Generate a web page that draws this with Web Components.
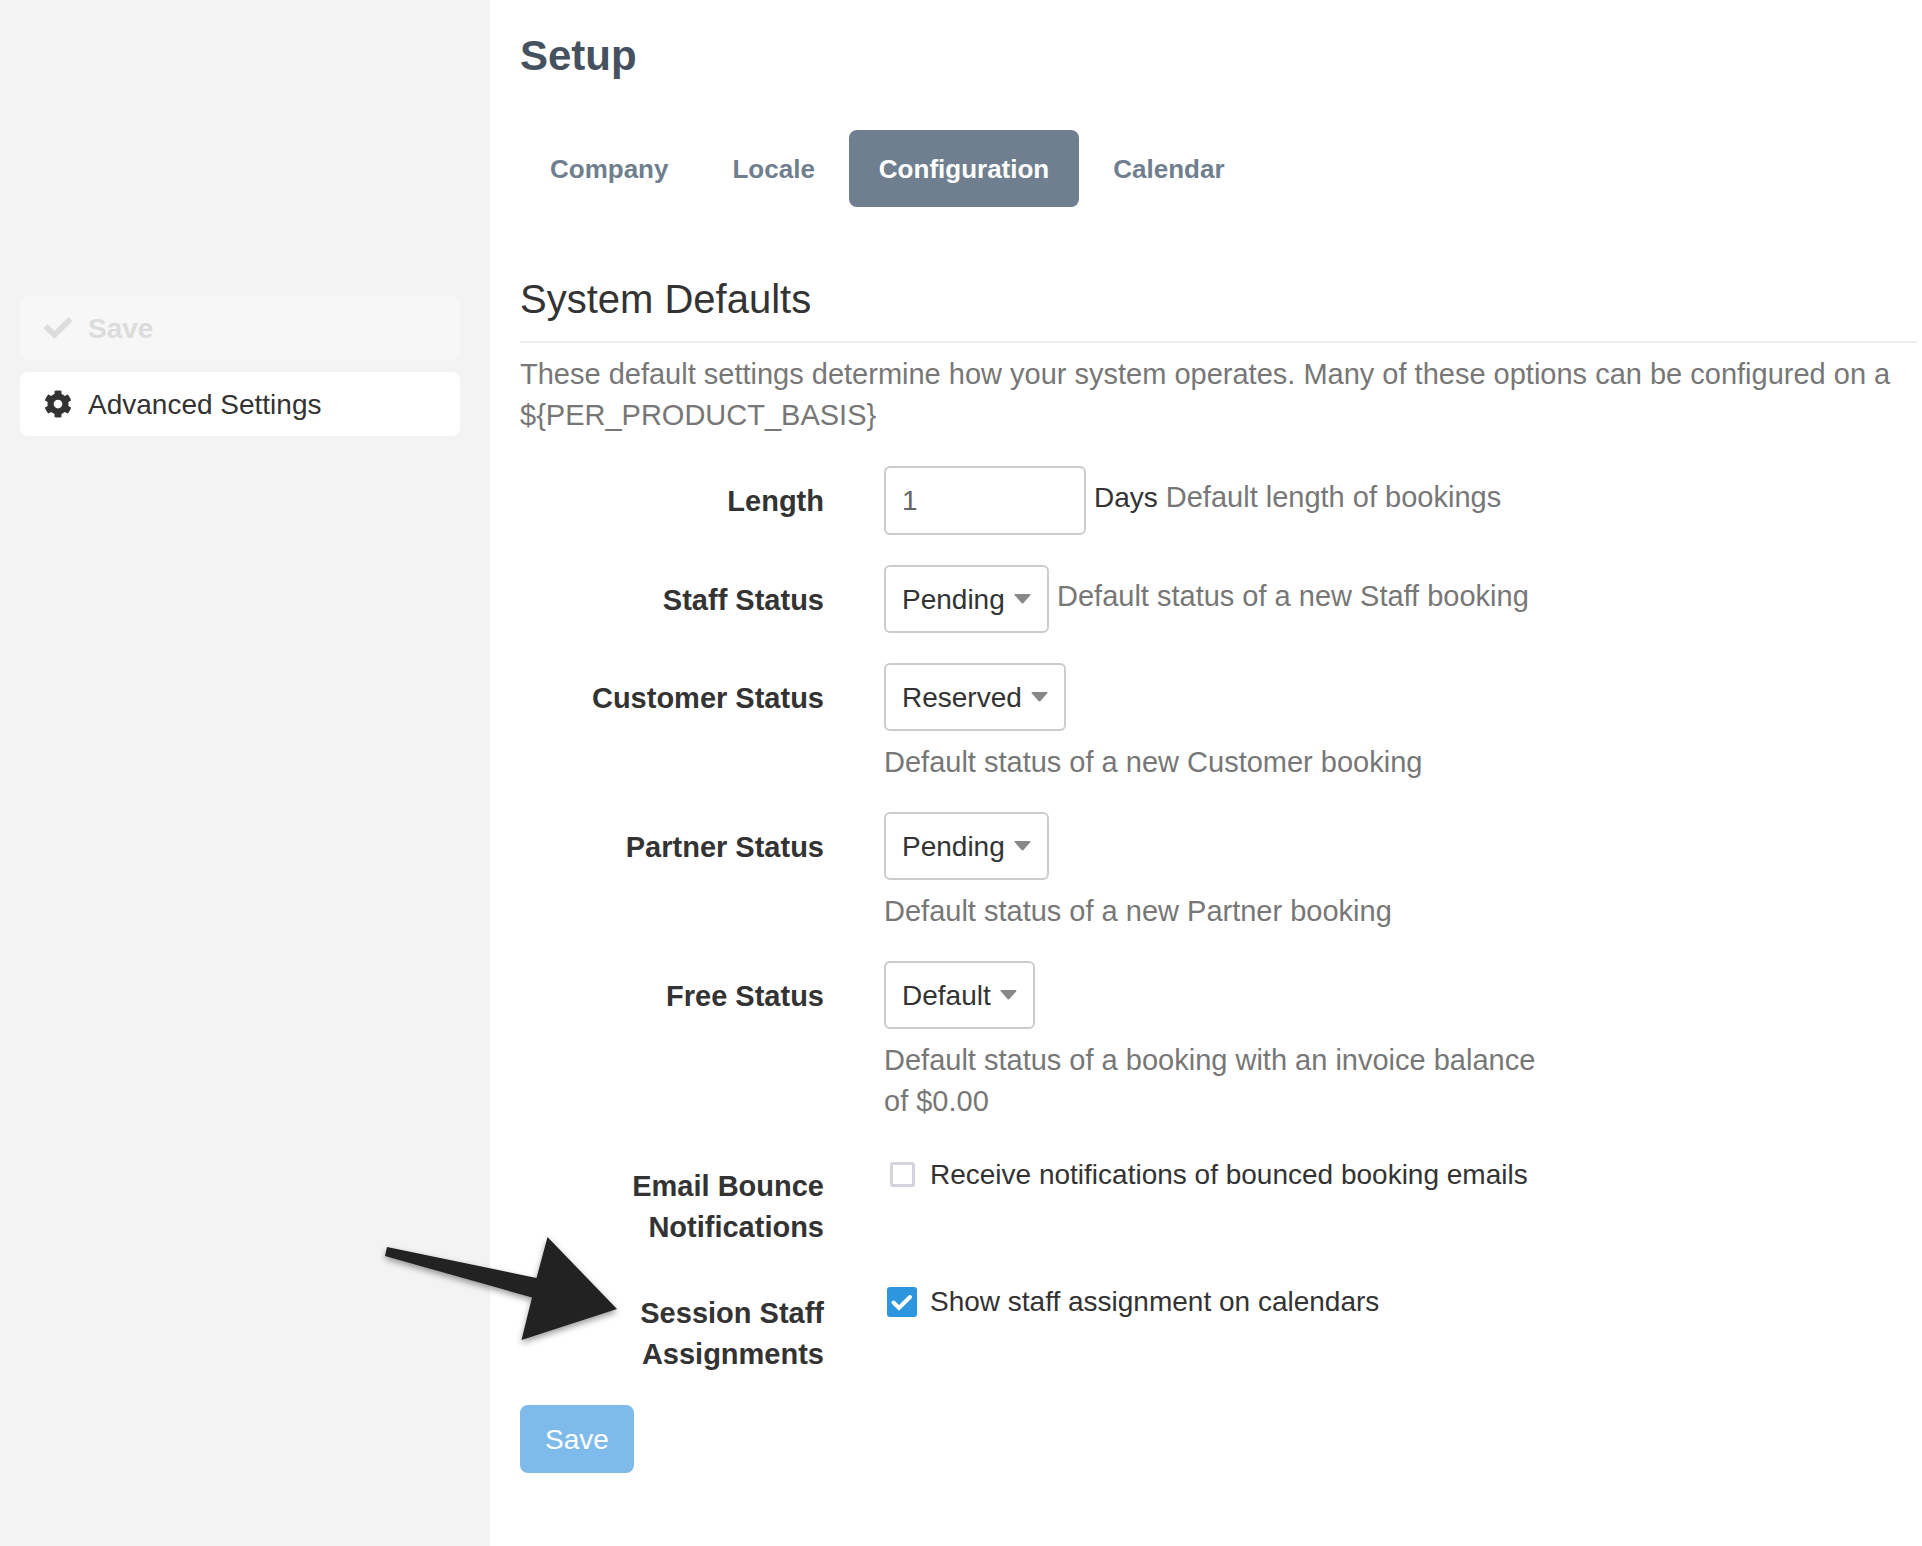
<!DOCTYPE html>
<html lang="en">
<head>
<meta charset="utf-8">
<title>Setup</title>
<style>
  html { height: 100%; }
  body {
    margin: 0;
    min-height: 100%;
    display: grid;
    background: #fff;
    color: #333;
    font: 28px/41px "Liberation Sans", Arial, sans-serif;
  }
</style>
</head>
<body>
<setup-page>
  <side-action slot="sidebar" icon="check" disabled>Save</side-action>
  <side-action slot="sidebar" icon="cog">Advanced Settings</side-action>

  <nav-tabs>
    <nav-tab>Company</nav-tab>
    <nav-tab>Locale</nav-tab>
    <nav-tab current>Configuration</nav-tab>
    <nav-tab>Calendar</nav-tab>
  </nav-tabs>

  <settings-section heading="System Defaults">
    <span slot="intro">These default settings determine how your system operates. Many of these options can be configured on a ${PER_PRODUCT_BASIS}</span>
    <form-field kind="text" label="Length" value="1" suffix="Days" help="Default length of bookings"></form-field>
    <form-field kind="select" label="Staff Status" value="Pending" help="Default status of a new Staff booking"></form-field>
    <form-field kind="select" label="Customer Status" value="Reserved" help="Default status of a new Customer booking"></form-field>
    <form-field kind="select" label="Partner Status" value="Pending" help="Default status of a new Partner booking"></form-field>
    <form-field kind="select" label="Free Status" value="Default" help="Default status of a booking with an invoice balance of $0.00"></form-field>
    <form-field kind="check" label="Email Bounce Notifications" text="Receive notifications of bounced booking emails"></form-field>
    <form-field kind="check" label="Session Staff Assignments" text="Show staff assignment on calendars" checked><pointer-arrow></pointer-arrow></form-field>
    <save-button slot="footer">Save</save-button>
  </settings-section>
</setup-page>

<script>
const define = (name, render) => customElements.define(name, class extends HTMLElement {
  constructor() {
    super();
    this.attachShadow({ mode: "open" });
  }
  connectedCallback() {
    this.shadowRoot.innerHTML = render(this);
  }
});

const ICONS = {
  check: "M173.898 439.404l-166.4-166.4c-9.997-9.997-9.997-26.206 0-36.204l36.203-36.204c9.997-9.998 26.207-9.998 36.204 0L192 312.69 432.095 72.596c9.997-9.997 26.207-9.997 36.204 0l36.203 36.204c9.997 9.997 9.997 26.206 0 36.204l-294.4 294.401c-9.998 9.997-26.207 9.997-36.204-.001z",
  cog: "M487.4 315.7l-42.6-24.6c4.3-23.2 4.3-47 0-70.2l42.6-24.6c4.9-2.8 7.1-8.6 5.5-14-11.1-35.6-30-67.8-54.7-94.6-3.8-4.1-10-5.1-14.8-2.3L380.8 110c-17.9-15.4-38.5-27.3-60.8-35.1V25.8c0-5.6-3.9-10.5-9.4-11.7-36.7-8.2-74.3-7.8-109.2 0-5.5 1.2-9.4 6.1-9.4 11.7V75c-22.2 7.9-42.8 19.8-60.8 35.1L88.7 85.5c-4.9-2.8-11-1.9-14.8 2.3-24.7 26.7-43.6 58.9-54.7 94.6-1.7 5.4.6 11.2 5.5 14L67.3 221c-4.3 23.2-4.3 47 0 70.2l-42.6 24.6c-4.9 2.8-7.1 8.6-5.5 14 11.1 35.6 30 67.8 54.7 94.6 3.8 4.1 10 5.1 14.8 2.3l42.6-24.6c17.9 15.4 38.5 27.3 60.8 35.1v49.2c0 5.6 3.9 10.5 9.4 11.7 36.7 8.2 74.3 7.8 109.2 0 5.5-1.2 9.4-6.1 9.4-11.7v-49.2c22.2-7.9 42.8-19.8 60.8-35.1l42.6 24.6c4.9 2.8 11 1.9 14.8-2.3 24.7-26.7 43.6-58.9 54.7-94.6 1.5-5.5-.7-11.3-5.6-14.1zM256 336c-44.1 0-80-35.9-80-80s35.9-80 80-80 80 35.9 80 80-35.9 80-80 80z"
};

define("setup-page", () => `
  <style>
    :host { display: flex; }
    aside {
      flex: 0 0 490px;
      box-sizing: border-box;
      padding: 296px 30px 30px 20px;
      background: #f3f3f3;
      display: flex;
      flex-direction: column;
      gap: 12px;
    }
    main { flex: 1; min-width: 0; padding: 31px 5px 30px 30px; }
    h1 { margin: 0 0 49px; font-size: 42px; line-height: 50px; color: #465160; }
  </style>
  <aside><slot name="sidebar"></slot></aside>
  <main><h1>Setup</h1><slot></slot></main>`);

define("side-action", el => `
  <style>
    :host { display: block; }
    button {
      display: flex;
      align-items: center;
      gap: 16px;
      width: 100%;
      height: 64px;
      padding: 0 24px;
      border: 0;
      border-radius: 8px;
      background: #fff;
      color: #333;
      font: inherit;
      cursor: pointer;
    }
    button:disabled { background: #f7f7f7; color: #dcdcdc; font-weight: bold; cursor: default; }
    svg { width: 28px; height: 28px; fill: currentColor; }
  </style>
  <button type="button" ${el.hasAttribute("disabled") ? "disabled" : ""}>
    <svg viewBox="0 0 512 512" aria-hidden="true"><path d="${ICONS[el.getAttribute("icon")]}"/></svg>
    <span><slot></slot></span>
  </button>`);

define("nav-tabs", () => `
  <style>
    :host { display: block; }
    nav { display: flex; flex-wrap: wrap; gap: 4px; }
  </style>
  <nav aria-label="Setup sections"><slot></slot></nav>`);

define("nav-tab", el => `
  <style>
    :host { display: block; }
    a {
      display: block;
      padding: 19px 30px 17px;
      border-radius: 8px;
      color: #6f7f8f;
      font-size: 26px;
      font-weight: bold;
      text-decoration: none;
    }
    a[aria-current] { background: #6f7f8f; color: #fff; }
  </style>
  <a href="#" ${el.hasAttribute("current") ? 'aria-current="page"' : ""}><slot></slot></a>`);

define("settings-section", el => `
  <style>
    :host { display: block; margin-top: 68px; }
    h2 {
      margin: 0 0 11px;
      padding-bottom: 18px;
      border-bottom: 2px solid #eee;
      font-size: 40px;
      line-height: 48px;
      font-weight: normal;
    }
    p { margin: 0 0 30px; font-size: 29px; color: #777; }
    form { display: flex; flex-direction: column; gap: 30px; }
  </style>
  <h2>${el.getAttribute("heading")}</h2>
  <p><slot name="intro"></slot></p>
  <form><slot></slot><slot name="footer"></slot></form>`);

const CONTROLS = {
  text: el => `
    <input class="box" id="control" type="text" value="${el.getAttribute("value")}">`,
  select: el => `
    <span class="picker">
      <select class="box" id="control"><option>${el.getAttribute("value")}</option></select>
      <svg viewBox="0 0 17 10" aria-hidden="true"><path d="M1.200 0h14.600q1.400 0 .5 1.200l-6.600 7.600q-1.200 1.200-2.400 0l-6.600-7.600q-.9-1.200.5-1.200z"/></svg>
    </span>`,
  check: el => `
    <label class="tick">
      <span class="mark">
        <input id="control" type="checkbox" ${el.hasAttribute("checked") ? "checked" : ""}>
        <svg viewBox="0 0 30 30" aria-hidden="true"><path d="M6.500 15.500l5.500 5.500L23 10"/></svg>
      </span>
      <span>${el.getAttribute("text")}</span>
    </label>`
};

define("form-field", el => `
  <style>
    :host {
      position: relative;
      display: grid;
      grid-template-columns: minmax(0, 304fr) 60px minmax(0, 670fr) minmax(0, 363fr);
      align-items: start;
    }
    .name { padding-top: 15px; text-align: right; font-size: 29px; font-weight: bold; }
    .control { grid-column: 3; display: flex; flex-wrap: wrap; align-items: flex-start; column-gap: 8px; }
    .box {
      box-sizing: border-box;
      height: 68px;
      padding: 0 16px;
      border: 2px solid #ccc;
      border-radius: 6px;
      background: #fff;
      color: #333;
      font: inherit;
    }
    input.box { width: 202px; height: 69px; color: #666; }
    .picker { display: grid; align-items: center; }
    .picker > * { grid-area: 1 / 1; }
    .picker svg { width: 17px; height: 10px; margin-right: 18px; justify-self: end; fill: #888; pointer-events: none; }
    select.box { appearance: none; padding-right: 42px; cursor: pointer; }
    .suffix, .help { margin-top: 11px; margin-bottom: -1px; }
    .help { font-size: 29px; color: #777; }
    .tick { display: flex; align-items: center; gap: 13px; padding: 3px 0 0 3px; }
    .mark { display: grid; place-items: center; width: 30px; height: 30px; }
    .mark > * { grid-area: 1 / 1; }
    .mark input {
      appearance: none;
      box-sizing: border-box;
      width: 25px;
      height: 25px;
      margin: 0;
      border: 3px solid #d5d3e0;
      border-radius: 3px;
    }
    .mark input:checked { width: 30px; height: 30px; border: 0; background: #2c97de; }
    .mark svg { width: 30px; height: 30px; fill: none; stroke: #fff; stroke-width: 4; stroke-linecap: round; visibility: hidden; pointer-events: none; }
    .mark input:checked + svg { visibility: visible; }
  </style>
  <label class="name" for="control">${el.getAttribute("label")}</label>
  <div class="control">
    ${CONTROLS[el.getAttribute("kind")](el)}
    ${el.hasAttribute("suffix") ? `<span class="suffix">${el.getAttribute("suffix")}</span>` : ""}
    ${el.hasAttribute("help") ? `<span class="help">${el.getAttribute("help")}</span>` : ""}
  </div>
  <slot></slot>`);

/* Callout arrow laid over the row, its tip just left of the row's label. */
define("pointer-arrow", () => `
  <style>
    :host { position: absolute; left: -140px; top: -48px; pointer-events: none; }
    svg { display: block; width: 250px; height: 120px; filter: drop-shadow(0 3px 3px rgba(0, 0, 0, .4)); }
  </style>
  <svg viewBox="380 1230 250 120" aria-hidden="true">
    <path fill="#222" d="M387 1247L536.500 1278L547.500 1237L617 1309L521.500 1340L532 1297.500L385 1256z"/>
  </svg>`);

define("save-button", () => `
  <style>
    :host { display: block; }
    button {
      height: 68px;
      padding: 0 25px;
      border: 0;
      border-radius: 8px;
      background: #7ebbea;
      color: #fff;
      font: inherit;
      cursor: pointer;
    }
  </style>
  <button type="button"><slot></slot></button>`);
</script>
</body>
</html>
